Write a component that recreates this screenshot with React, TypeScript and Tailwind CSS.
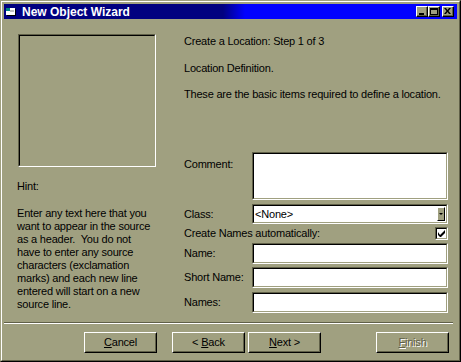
import type { ReactNode } from "react";

/** Sunken 2px bevel used by text fields, the picture frame and the checkbox. */
function Sunken({ className = "", children }: { className?: string; children?: ReactNode }) {
  return (
    <div className={`border border-t-[#606048] border-l-[#606048] border-r-white border-b-white ${className}`}>
      <div className="h-full w-full border border-t-black border-l-black border-r-[#a0a080] border-b-[#a0a080]">
        {children}
      </div>
    </div>
  );
}

/** Raised bevel, as on push buttons. */
function Raised({ className = "", children }: { className?: string; children?: ReactNode }) {
  return (
    <div className={`border border-t-white border-l-white border-r-black border-b-black bg-[#a0a080] ${className}`}>
      <div className="flex h-full w-full items-center justify-center border border-t-[#a0a080] border-l-[#a0a080] border-r-[#606048] border-b-[#606048]">
        {children}
      </div>
    </div>
  );
}

function CaptionButton({ children }: { children: ReactNode }) {
  return (
    <div className="h-[11px] w-[12px] border border-t-white border-l-white border-r-black border-b-black bg-[#a0a080]">
      <div className="flex h-full w-full items-center justify-center border-r border-b border-r-[#606048] border-b-[#606048]">
        {children}
      </div>
    </div>
  );
}

function PushButton({ accel, rest, prefix = "", disabled = false, className = "" }: {
  accel: string;
  rest: string;
  prefix?: string;
  disabled?: boolean;
  className?: string;
}) {
  return (
    <Raised className={`h-[21px] w-[73px] ${className}`}>
      <span
        className={
          disabled
            ? "text-[#606048] [text-shadow:1px_1px_0_#ffffff]"
            : "text-black"
        }
      >
        {prefix}
        <span className="underline underline-offset-[1px]">{accel}</span>
        {rest}
      </span>
    </Raised>
  );
}

function FieldRow({ label, className = "" }: { label: string; className?: string }) {
  return (
    <div className={`flex items-center ${className}`}>
      <span className="w-[68px] leading-[13px]">{label}</span>
      <Sunken className="h-[21px] flex-1 bg-white" />
    </div>
  );
}

export default function App() {
  return (
    <div className="h-[362px] w-[461px] border border-t-[#a0a080] border-l-[#a0a080] border-r-black border-b-black bg-[#a0a080] font-['Liberation_Sans',Arial,sans-serif] text-[11px] tracking-[-0.2px] text-black">
      <div className="flex h-full w-full flex-col border border-t-white border-l-white border-r-[#606048] border-b-[#606048] p-[2px]">
        {/* Caption */}
        <div className="flex h-[15px] items-center bg-[linear-gradient(to_right,#000080_219px,#0000ff_241px)] pl-[1px] pr-[3px]">
          <svg width="12" height="12" viewBox="0 0 12 12" className="shrink-0">
            <rect x="1" y="2" width="9" height="7" fill="#ffffff" />
            <rect x="1" y="2" width="4" height="3" fill="#008080" />
            <rect x="5" y="4" width="4" height="2" fill="#c0c0c0" />
            <rect x="2" y="9" width="9" height="1" fill="#000000" />
            <rect x="10" y="3" width="1" height="7" fill="#000000" />
          </svg>
          <span className="ml-[5px] text-[12px] font-bold leading-none tracking-normal text-white">New Object Wizard</span>
          <div className="ml-auto flex">
            <CaptionButton>
              <span className="mt-[5px] ml-[-1px] block h-[2px] w-[5px] bg-black" />
            </CaptionButton>
            <CaptionButton>
              <span className="block h-[7px] w-[8px] border border-t-2 border-black" />
            </CaptionButton>
            <div className="ml-[2px]">
              <CaptionButton>
                <svg width="7" height="6" viewBox="0 0 7 6">
                  <path d="M0 0h2l1.5 2L5 0h2L4.5 3 7 6H5L3.5 4 2 6H0l2.5-3z" fill="#000" />
                </svg>
              </CaptionButton>
            </div>
          </div>
        </div>

        {/* Body */}
        <div className="flex flex-1">
          <div className="w-[180px] pt-[15px] pl-[13px]">
            <Sunken className="ml-[1px] h-[133px] w-[138px]" />
            <p className="mt-[13px] leading-[13px]">Hint:</p>
            <p className="mt-[14px] whitespace-nowrap leading-[13px]">
              Enter any text here that you
              <br />
              want to appear in the source
              <br />
              as a header.&nbsp; You do not
              <br />
              have to enter any source
              <br />
              characters (exclamation
              <br />
              marks) and each new line
              <br />
              entered will start on a new
              <br />
              source line.
            </p>
          </div>

          <div className="flex-1 pt-[16px] pr-[9px]">
            <p className="leading-[13px]">Create a Location: Step 1 of 3</p>
            <p className="mt-[14px] leading-[13px]">Location Definition.</p>
            <p className="mt-[13px] leading-[13px]">These are the basic items required to define a location.</p>

            <div className="mt-[51px] flex items-start">
              <span className="w-[68px] pt-[6px] leading-[13px]">Comment:</span>
              <Sunken className="h-[48px] flex-1 bg-white" />
            </div>

            <div className="mt-[4px] flex items-center">
              <span className="w-[68px] leading-[13px]">Class:</span>
              <Sunken className="h-[20px] flex-1 bg-white">
                <div className="flex h-full items-center">
                  <span className="flex-1 pl-[1px] leading-[13px]">&lt;None&gt;</span>
                  <div className="mr-[1px] h-[14px] w-[8px] border border-t-white border-l-white border-r-black border-b-black bg-[#a0a080]">
                    <div className="flex h-full w-full items-center justify-center">
                      <span className="block h-0 w-0 border-x-[2px] border-t-[2px] border-x-transparent border-t-black" />
                    </div>
                  </div>
                </div>
              </Sunken>
            </div>

            <div className="flex h-[19px] items-center justify-between">
              <span className="leading-[13px]">Create Names automatically:</span>
              <Sunken className="h-[13px] w-[13px] bg-white">
                <svg width="9" height="9" viewBox="0 0 9 9" className="block">
                  <path d="M1 3v3l2 2h1l4-4V1L3 6z" fill="#000" />
                </svg>
              </Sunken>
            </div>

            <FieldRow label="Name:" />
            <FieldRow label="Short Name:" className="mt-[3px]" />
            <FieldRow label="Names:" className="mt-[4px]" />
          </div>
        </div>

        {/* Separator */}
        <div className="mr-[4px] h-[2px] border-t border-b border-t-[#606048] border-b-white" />

        {/* Buttons */}
        <div className="flex h-[34px] items-start pt-[8px]">
          <PushButton className="ml-[80px]" accel="C" rest="ancel" />
          <PushButton className="ml-[15px]" prefix="< " accel="B" rest="ack" />
          <PushButton className="ml-[3px]" accel="N" rest="ext >" />
          <PushButton className="ml-[55px]" accel="F" rest="inish" disabled />
        </div>
      </div>
    </div>
  );
}
